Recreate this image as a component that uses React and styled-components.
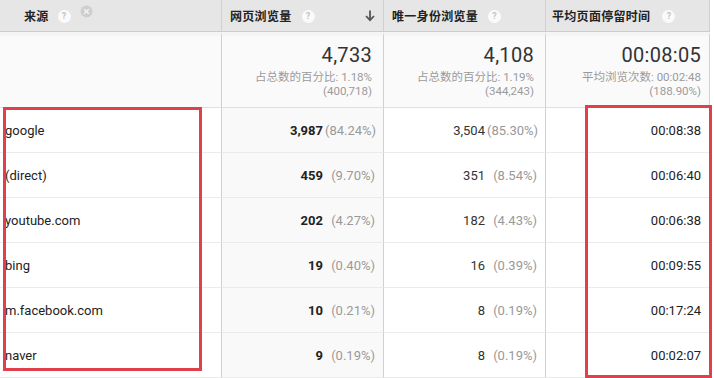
import React from "react";
import styled, { createGlobalStyle } from "styled-components";

const Global = createGlobalStyle`
  html, body { margin: 0; padding: 0; background: #fff; }
  body { font-family: Roboto, "Noto Sans CJK SC", Arial, sans-serif; color: #222; }
`;

const Wrap = styled.div`
  position: relative;
  width: 714px;
  height: 378px;
  overflow: hidden;
`;

const Grid = styled.div`
  display: grid;
  grid-template-columns: 222px 162px 162px 164px;
  width: 714px;
`;

const HeadCell = styled.div`
  height: 32px;
  box-sizing: border-box;
  background: #e6e6e6;
  border-bottom: 1px solid #cccccc;
  border-right: 1px solid #d0d0d0;
  display: flex;
  align-items: center;
  padding: 0 ${(p) => p.$pad || "8px"};
  font-size: 12px;
  font-weight: bold;
  color: #222;
`;

const HeadLabel = styled.span`
  padding-left: ${(p) => p.$indent || "0"};
  letter-spacing: 0.3px;
`;

const Help = styled.span`
  display: inline-flex;
  align-items: center;
  justify-content: center;
  width: 13px;
  height: 13px;
  border-radius: 50%;
  background: #fafafa;
  color: #c4c4c4;
  font-size: 9px;
  font-weight: bold;
  margin-left: ${(p) => p.$ml || "10px"};
  margin-top: 1px;
`;

const ClearIcon = styled.svg`
  margin-left: 9px;
  margin-top: -8px;
`;

const Spacer = styled.span`
  flex: 1;
`;

const SumCell = styled.div`
  height: 76px;
  box-sizing: border-box;
  background: #fafafa;
  border-right: 1px solid #d0d0d0;
  border-top: 4px solid #f5f5f5;
  border-bottom: 1px solid #e0e0e0;
  display: flex;
  flex-direction: column;
  align-items: flex-end;
  padding: 6px ${(p) => p.$pr || "11px"} 0 0;
`;

const Big = styled.div`
  font-size: 20px;
  color: #333;
  line-height: 26px;
  margin-bottom: 2px;
  letter-spacing: 0.3px;
`;

const Small = styled.div`
  font-size: 11.5px;
  color: #9a9a9a;
  line-height: 14px;
`;

const Cell = styled.div`
  height: 45px;
  box-sizing: border-box;
  background: ${(p) => (p.$shade ? "#f9f9f9" : "#fff")};
  border-right: 1px solid #d0d0d0;
  border-bottom: 1px solid #ebebeb;
  display: flex;
  align-items: center;
  justify-content: ${(p) => (p.$left ? "flex-start" : "flex-end")};
  padding: ${(p) => (p.$left ? "0 0 0 5px" : "0 8px 0 0")};
  font-size: 13px;
  color: #222;
`;

const Num = styled.span`
  font-weight: ${(p) => (p.$bold ? "bold" : "normal")};
  color: ${(p) => (p.$bold ? "#222" : "#333")};
`;

const Pct = styled.span`
  width: 50px;
  text-align: right;
  color: #999;
  margin-left: 2px;
`;

const RedBox = styled.div`
  position: absolute;
  border: 3px solid #e0404c;
  box-sizing: border-box;
`;

const rows = [
  { src: "google", pv: "3,987", pvp: "(84.24%)", uv: "3,504", uvp: "(85.30%)", t: "00:08:38" },
  { src: "(direct)", pv: "459", pvp: "(9.70%)", uv: "351", uvp: "(8.54%)", t: "00:06:40" },
  { src: "youtube.com", pv: "202", pvp: "(4.27%)", uv: "182", uvp: "(4.43%)", t: "00:06:38" },
  { src: "bing", pv: "19", pvp: "(0.40%)", uv: "16", uvp: "(0.39%)", t: "00:09:55" },
  { src: "m.facebook.com", pv: "10", pvp: "(0.21%)", uv: "8", uvp: "(0.19%)", t: "00:17:24" },
  { src: "naver", pv: "9", pvp: "(0.19%)", uv: "8", uvp: "(0.19%)", t: "00:02:07" },
];

export default function App() {
  return (
    <Wrap>
      <Global />
      <Grid>
        <HeadCell>
          <HeadLabel $indent="16px">来源</HeadLabel>
          <Help $ml="9px">?</Help>
          <ClearIcon width="13" height="13" viewBox="0 0 13 13">
            <circle cx="6.5" cy="6.5" r="6" fill="#cfcfcf" />
            <path d="M4.2 4.2 L8.8 8.8 M8.8 4.2 L4.2 8.8" stroke="#f2f2f2" strokeWidth="1.6" />
          </ClearIcon>
        </HeadCell>
        <HeadCell>
          <HeadLabel>网页浏览量</HeadLabel>
          <Help>?</Help>
          <Spacer />
          <svg width="10" height="12" viewBox="0 0 10 12">
            <path d="M5 0.5 V10 M1 6 L5 10.2 L9 6" stroke="#555" strokeWidth="1.8" fill="none" />
          </svg>
        </HeadCell>
        <HeadCell>
          <HeadLabel>唯一身份浏览量</HeadLabel>
          <Help>?</Help>
        </HeadCell>
        <HeadCell $pad="6px">
          <HeadLabel>平均页面停留时间</HeadLabel>
          <Help $ml="12px">?</Help>
        </HeadCell>

        <SumCell />
        <SumCell>
          <Big>4,733</Big>
          <Small>占总数的百分比: 1.18%</Small>
          <Small>(400,718)</Small>
        </SumCell>
        <SumCell>
          <Big>4,108</Big>
          <Small>占总数的百分比: 1.19%</Small>
          <Small>(344,243)</Small>
        </SumCell>
        <SumCell $pr="8px">
          <Big>00:08:05</Big>
          <Small>平均浏览次数: 00:02:48</Small>
          <Small>(188.90%)</Small>
        </SumCell>

        {rows.map((r) => (
          <React.Fragment key={r.src}>
            <Cell $left>{r.src}</Cell>
            <Cell $shade>
              <Num $bold>{r.pv}</Num>
              <Pct>{r.pvp}</Pct>
            </Cell>
            <Cell>
              <Num>{r.uv}</Num>
              <Pct>{r.uvp}</Pct>
            </Cell>
            <Cell>{r.t}</Cell>
          </React.Fragment>
        ))}
      </Grid>
      <RedBox style={{ left: 3, top: 107, width: 199, height: 264 }} />
      <RedBox style={{ left: 585, top: 105, width: 127, height: 273 }} />
    </Wrap>
  );
}
